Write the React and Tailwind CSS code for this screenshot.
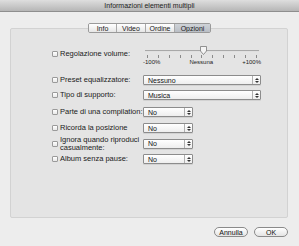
import React from 'react';

const font = { fontFamily: '"Liberation Sans", Arial, sans-serif' };

const Checkbox = () => (
  <div className="w-[6px] h-[6px] shrink-0 border border-[#9a9a9a] bg-gradient-to-b from-[#ffffff] to-[#e8e8e8] rounded-[1px]" />
);

const Stepper = () => (
  <div className="w-[8px] h-full border-l border-[#b0b0b0] flex flex-col items-center justify-center gap-[1px]">
    <svg width="4" height="2" viewBox="0 0 4 2"><path d="M0 2 L2 0 L4 2 Z" fill="#333" /></svg>
    <svg width="4" height="2" viewBox="0 0 4 2"><path d="M0 0 L2 2 L4 0 Z" fill="#333" /></svg>
  </div>
);

const Select = ({ value, wide }) => (
  <div
    className={`${wide ? 'w-[118px]' : 'w-[50px]'} h-[10px] flex items-center justify-between border border-[#8c8c8c] rounded-[1px] bg-gradient-to-b from-[#ffffff] to-[#eeeeee] shadow-[0_1px_0_rgba(0,0,0,0.08)]`}
  >
    <span className="pl-[4px] text-[7px] leading-none text-[#111]">{value}</span>
    <Stepper />
  </div>
);

const Row = ({ label, children, className = '' }) => (
  <div className={`flex items-center ${className}`}>
    <div className="w-[91px] flex items-center gap-[2px]">
      <Checkbox />
      <span className="text-[7.5px] leading-[7.5px] text-[#1a1a1a]">{label}</span>
    </div>
    {children}
  </div>
);

const Slider = () => {
  const ticks = Array.from({ length: 11 });
  return (
    <div className="w-[118px] flex flex-col">
      <div className="relative h-[9px] flex items-center px-[2px]">
        <div className="w-full h-[2px] bg-[#a8a8a8] border-b border-[#e0e0e0]" />
        <svg className="absolute left-[57px] top-0" width="7" height="9" viewBox="0 0 7 9">
          <path d="M0.5 0.5 H6.5 V5 L3.5 8.5 L0.5 5 Z" fill="#f4f4f4" stroke="#7a7a7a" strokeWidth="0.8" />
        </svg>
      </div>
      <div className="h-[3px] flex justify-between px-[4px]">
        {ticks.map((_, i) => (
          <div key={i} className="w-[1px] h-[3px] bg-[#8a8a8a]" />
        ))}
      </div>
      <div className="flex justify-between text-[6px] leading-none text-[#222] mt-[1px]">
        <span>-100%</span>
        <span>Nessuna</span>
        <span>+100%</span>
      </div>
    </div>
  );
};

const Tab = ({ label, active, first, last }) => (
  <div
    className={`h-full flex items-center justify-center text-[7px] leading-none text-[#1a1a1a] ${
      active ? 'bg-gradient-to-b from-[#cfd3d8] to-[#b9bec5]' : 'bg-gradient-to-b from-[#ffffff] to-[#e6e6e6]'
    } ${first ? '' : 'border-l border-[#a8a8a8]'} ${last ? 'w-[36px]' : first ? 'w-[27px]' : 'w-[29px]'}`}
  >
    {label}
  </div>
);

const Button = ({ label }) => (
  <div className="w-[34px] h-[10px] flex items-center justify-center rounded-full border border-[#8a8a8a] bg-gradient-to-b from-[#ffffff] to-[#e4e4e4] text-[7px] leading-none text-[#111]">
    {label}
  </div>
);

export default function App() {
  return (
    <div className="w-[299px] h-[246px] bg-[#ededed] flex flex-col overflow-hidden" style={font}>
      <div className="h-[12px] shrink-0 flex items-center justify-center bg-gradient-to-b from-[#dedede] to-[#b6b6b6] border-b border-[#8e8e8e]">
        <span className="text-[7px] leading-none text-[#222]">Informazioni elementi multipli</span>
      </div>

      <div className="relative z-10 mt-[11px] self-center h-[10px] flex rounded-[2px] border border-[#9a9a9a] overflow-hidden">
        <Tab label="Info" first />
        <Tab label="Video" />
        <Tab label="Ordine" />
        <Tab label="Opzioni" active last />
      </div>

      <div className="-mt-[5px] ml-[10px] w-[278px] h-[190px] shrink-0 bg-[#e4e4e4] border border-[#d2d2d2] rounded-[2px] pl-[41px] pt-[21px] flex flex-col">
        <Row label="Regolazione volume:" className="items-start">
          <div className="-mt-[4px]">
            <Slider />
          </div>
        </Row>
        <Row label="Preset equalizzatore:" className="mt-[10px]">
          <Select value="Nessuno" wide />
        </Row>
        <Row label="Tipo di supporto:" className="mt-[5px]">
          <Select value="Musica" wide />
        </Row>
        <Row label="Parte di una compilation:" className="mt-[7px]">
          <Select value="No" />
        </Row>
        <Row label="Ricorda la posizione" className="mt-[6px]">
          <Select value="No" />
        </Row>
        <Row label={<>Ignora quando riproduci<br />casualmente:</>} className="mt-[3px] h-[15px]">
          <Select value="No" />
        </Row>
        <Row label="Album senza pause:" className="mt-[3px]">
          <Select value="No" />
        </Row>
      </div>

      <div className="flex justify-end gap-[6px] mr-[11px] mt-[9px]">
        <Button label="Annulla" />
        <Button label="OK" />
      </div>
    </div>
  );
}
